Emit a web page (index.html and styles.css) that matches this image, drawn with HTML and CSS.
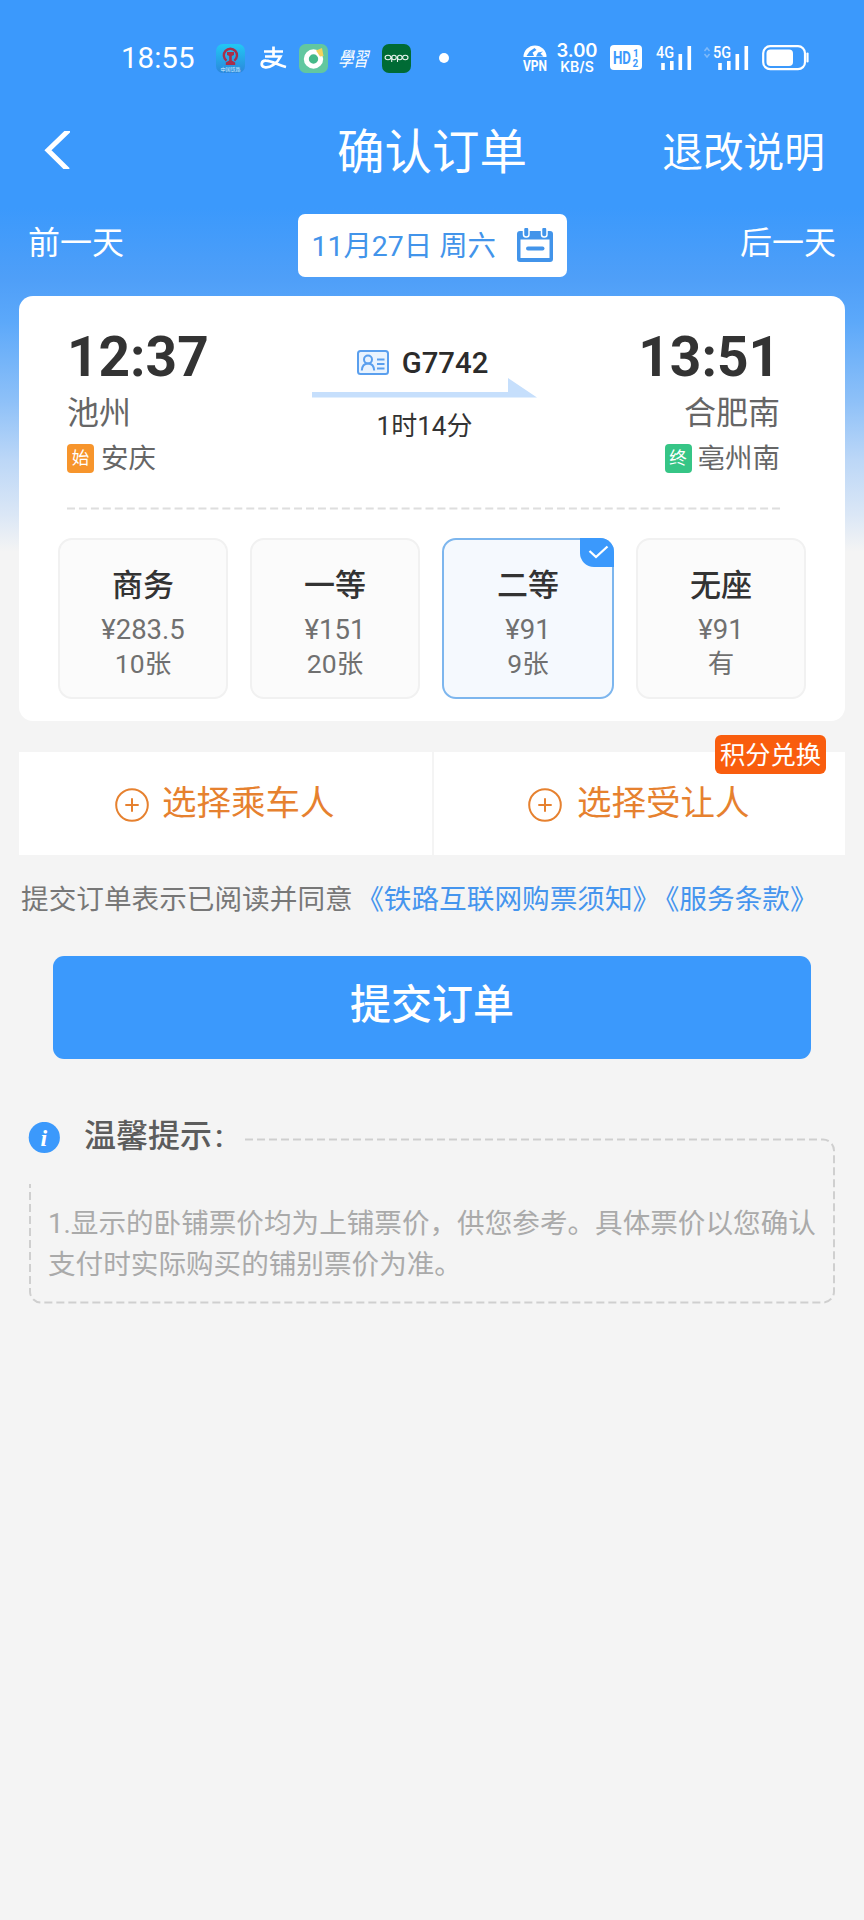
FILE: index.html
```html
<!DOCTYPE html>
<html lang="zh-CN">
<head>
<meta charset="utf-8">
<title>确认订单</title>
<link rel="stylesheet" href="styles.css">
</head>
<body>
<div class="screen">
  <div class="status">
    <span class="clock">18:55</span>
    <svg class="s-rail" width="29" height="29" viewBox="0 0 29 29">
      <defs><linearGradient id="rail" x1="0" y1="0" x2="0" y2="1"><stop offset="0" stop-color="#22c8f4"/><stop offset="1" stop-color="#2b86dc"/></linearGradient></defs>
      <rect width="29" height="29" rx="7" fill="url(#rail)"/>
      <path d="M10.500 16.600A6.600 6.600 0 1 1 18.300 16.600" fill="none" stroke="#a92f4a" stroke-width="2.400"/>
      <path d="M11 8h7v3l-2.200 1v4.500l3.400 2v2.500H9.800v-2.500l3.400-2V12L11 11z" fill="#a92f4a"/>
      <text x="14.500" y="26.500" text-anchor="middle" class="t-rail">中国铁路</text>
    </svg>
    <svg class="s-pay" width="28" height="26" viewBox="0 0 28 26" fill="none" stroke="#fff" stroke-width="2.700">
      <path d="M5 6.500h19M14.500 1.500v9.500M6 11.500h15.500C18 19 11 23 6 22.300c-5-1-4-7 1-6.600 6 .3 12 4.300 20 6.300"/>
    </svg>
    <svg class="s-ring" width="29" height="29" viewBox="0 0 29 29">
      <rect width="29" height="29" rx="6.500" fill="#62c7a0"/>
      <circle cx="14.500" cy="15" r="7.200" fill="#45b989" stroke="#fff" stroke-width="5"/>
      <path d="M17 6.500l6-2.500 1.500 8-3.500.5z" fill="#f4d35d"/>
    </svg>
    <span class="s-study">學習</span>
    <svg class="s-oppo" width="29" height="29" viewBox="0 0 29 29">
      <rect width="29" height="29" rx="7" fill="#006b35"/>
      <g fill="none" stroke="#e9f4ee" stroke-width="1.100"><ellipse cx="6" cy="13.500" rx="2.900" ry="2.200"/><ellipse cx="12" cy="13.500" rx="2.300" ry="2.200"/><ellipse cx="17.800" cy="13.500" rx="2.300" ry="2.200"/><ellipse cx="23.300" cy="13.500" rx="2.700" ry="2.200"/><path d="M9.700 13v5M15.500 13v5"/></g>
    </svg>
    <span class="s-dot"></span>
    <svg class="s-vpn" width="26" height="27" viewBox="0 0 26 27">
      <path d="M1.500 12a11.500 11.500 0 0 1 23 0z" fill="#fff"/>
      <path d="M4.500 11l3-4.500 5-3.500 2 2-4 2.500 1.500 3.500zM14 11.500l2-4 5-1-2.500 2 3 3z" fill="#3b99fc"/>
      <text x="1" y="25.500" class="t-vpn" textLength="24" lengthAdjust="spacingAndGlyphs">VPN</text>
    </svg>
    <span class="speed"><b>3.00</b><i>KB/S</i></span>
    <svg class="s-hd" width="32" height="25" viewBox="0 0 32 25">
      <rect width="32" height="25" rx="4" fill="#fff"/>
      <text x="3" y="19" class="t-hd" textLength="18" lengthAdjust="spacingAndGlyphs">HD</text>
      <text x="23" y="11.500" class="t-sm">1</text><text x="22.500" y="22" class="t-sm">2</text>
    </svg>
    <svg class="s-4g" width="36" height="26" viewBox="0 0 36 26">
      <text x="0" y="12.500" class="t-g" textLength="18" lengthAdjust="spacingAndGlyphs">4G</text>
      <path d="M5.200 18h3.600v7H5.200zM14 16h3.600v9H14zM22.500 9h3.600v16h-3.600zM31.500 1h3.600v24h-3.600z" fill="#fff"/>
    </svg>
    <svg class="s-5g" width="46" height="26" viewBox="0 0 46 26">
      <path d="M1.500 6l2.500-3 2.500 3M1.500 9l2.500 3L6.500 9" fill="none" stroke="#7fbafa" stroke-width="1.500"/>
      <text x="10" y="12.500" class="t-g" textLength="18" lengthAdjust="spacingAndGlyphs">5G</text>
      <path d="M15.200 18h3.600v7h-3.600zM24 16h3.600v9H24zM32.500 9h3.600v16h-3.600zM41.500 1h3.600v24h-3.600z" fill="#fff"/>
    </svg>
    <svg class="s-bat" width="48" height="26" viewBox="0 0 48 26">
      <rect x="1.200" y="1.200" width="41.800" height="23" rx="7" fill="none" stroke="#fff" stroke-width="2.200"/>
      <rect x="4.500" y="4.500" width="26.500" height="16.500" rx="4" fill="#fff"/>
      <path d="M45.500 8.500v8" stroke="#fff" stroke-width="2.200" stroke-linecap="round"/>
    </svg>
  </div>

  <header class="nav">
    <svg class="back" width="27" height="38" viewBox="0 0 27 38"><path d="M26 -1L5 19.200 25 39" fill="none" stroke="#fff" stroke-width="5"/></svg>
    <h1 class="title">确认订单</h1>
    <span class="rules">退改说明</span>
  </header>

  <div class="days">
    <span class="day">前一天</span>
    <div class="date">
      <span class="date-text">11月27日 周六</span>
      <svg width="36" height="34" viewBox="0 0 36 34">
        <path d="M3 3h30a3 3 0 0 1 3 3v25a3 3 0 0 1-3 3H3a3 3 0 0 1-3-3V6a3 3 0 0 1 3-3z" fill="#4294ea"/>
        <path d="M3.500 11.500h29v18.500h-29z" fill="#fff"/>
        <g fill="#4294ea" stroke="#fff" stroke-width="1.500"><rect x="6.500" y="-1" width="5.500" height="10" rx="2.500"/><rect x="24.500" y="-1" width="5.500" height="10" rx="2.500"/></g>
        <path d="M11 20.500h14.500" stroke="#4294ea" stroke-width="4" stroke-linecap="round"/>
      </svg>
    </div>
    <span class="day">后一天</span>
  </div>

  <section class="card">
    <div class="trip">
      <div class="stop">
        <div class="time">12:37</div>
        <div class="station">池州</div>
        <div class="origin"><span class="tag">始</span>安庆</div>
      </div>
      <div class="train">
        <div class="number">
          <svg width="32" height="25" viewBox="0 0 32 25" fill="none" stroke="#5a9fee" stroke-width="2">
            <rect x="1" y="1" width="30" height="23" rx="2.500" fill="#e9f3fe"/>
            <circle cx="11" cy="9.500" r="4"/><path d="M4.800 20.500c.3-5 2.800-7 6.200-7s5.900 2 6.200 7M20 9.500h7.500M20 14h7.500M20 18.500h7.500"/>
          </svg>
          <span>G7742</span>
        </div>
        <svg class="arrow" width="226" height="20" viewBox="0 0 226 20"><path d="M0 14h196V0l29 19.500H0z" fill="#c6dffc"/></svg>
        <div class="duration">1时14分</div>
      </div>
      <div class="stop end">
        <div class="time">13:51</div>
        <div class="station">合肥南</div>
        <div class="origin"><span class="tag green">终</span>亳州南</div>
      </div>
    </div>
    <svg class="rule" width="714" height="3" viewBox="0 0 714 3"><path d="M0 1.500h714" stroke="#dedede" stroke-width="2" stroke-dasharray="8 3.950"/></svg>
    <div class="seats">
      <div class="seat"><b>商务</b><span class="price">¥283.5</span><span class="left">10张</span></div>
      <div class="seat"><b>一等</b><span class="price">¥151</span><span class="left">20张</span></div>
      <div class="seat selected"><b>二等</b><span class="price">¥91</span><span class="left">9张</span>
        <svg class="check" width="34" height="29" viewBox="0 0 34 29"><path d="M0 0h20a14 14 0 0 1 14 14v15H14A14 14 0 0 1 0 15z" fill="#3b99fc"/><path d="M9.500 13l6.500 6L27.500 8.500" fill="none" stroke="#fff" stroke-width="2.300"/></svg>
      </div>
      <div class="seat"><b>无座</b><span class="price">¥91</span><span class="left">有</span></div>
    </div>
  </section>

  <div class="people">
    <div class="person">
      <svg width="34" height="34" viewBox="0 0 34 34" fill="none" stroke="#e6812f" stroke-width="2"><circle cx="17" cy="17" r="15.800"/><path d="M10.300 17h13.400M17 10.300v13.400"/></svg>
      <span>选择乘车人</span>
    </div>
    <div class="person">
      <svg width="34" height="34" viewBox="0 0 34 34" fill="none" stroke="#e6812f" stroke-width="2"><circle cx="17" cy="17" r="15.800"/><path d="M10.300 17h13.400M17 10.300v13.400"/></svg>
      <span>选择受让人</span>
      <em class="points">积分兑换</em>
    </div>
  </div>

  <p class="agree">提交订单表示已阅读并同意<a class="first">《铁路互联网购票须知》</a><a class="second">《服务条款》</a></p>

  <button class="submit">提交订单</button>

  <section class="tips">
    <svg class="tips-frame" width="808" height="167" viewBox="0 0 808 167" fill="none" stroke="#cfcfcf" stroke-width="2" stroke-dasharray="8 4"><path d="M217 1.500h578a11 11 0 0 1 11 11v141a11 11 0 0 1-11 11H13A11 11 0 0 1 2 153.500V46"/></svg>
    <h2 class="tips-head">
      <svg width="32" height="32" viewBox="0 0 32 32"><circle cx="16.300" cy="15.500" r="15.600" fill="#3b99fc"/><text x="15.800" y="23.500" text-anchor="middle" class="t-info">i</text></svg>
      <span>温馨提示<span class="colon">:</span></span>
    </h2>
    <p class="tips-text">1.显示的卧铺票价均为上铺票价，供您参考。具体票价以您确认<br>支付时实际购买的铺别票价为准。</p>
  </section>
</div>
</body>
</html>
```
FILE: styles.css
```css
* { box-sizing: border-box; }
body {
  margin: 0;
  background: #f4f4f4;
  font-family: Roboto, "Noto Sans CJK SC", sans-serif;
  font-weight: 400;
}
svg { display: block; flex: none; }
.screen {
  width: 864px;
  height: 1920px;
  overflow: hidden;
  background: linear-gradient(#3b99fc 0, #3b99fc 208px, #4f9ff8 280px, #5ba8fa 320px, #8dc0f8 400px, #bcd7f7 460px, #dbe7f6 515px, #f4f4f4 552px);
}

/* status bar */
.status { display: flex; align-items: center; height: 116px; padding-left: 121px; color: #fff; }
.status svg { overflow: visible; }
.clock { width: 95px; font: 400 29.500px/36px Roboto, sans-serif; }
.s-pay { margin-left: 14px; }
.s-ring { margin-left: 12px; }
.s-study { width: 30px; margin-left: 12px; font: 400 15px/20px "Noto Sans CJK TC", sans-serif; transform: skewX(-14deg) scaleY(1.3); white-space: nowrap; }
.s-oppo { margin-left: 12px; }
.s-dot { width: 10px; height: 10px; margin-left: 28px; border-radius: 50%; background: #fff; }
.s-vpn { margin-left: 73px; }
.speed { display: flex; flex-direction: column; align-items: center; width: 42px; margin: 0 0 0 8px; font-family: Inter, sans-serif; }
.speed b { font-size: 18.500px; line-height: 17px; font-weight: 600; }
.speed i { font-size: 14px; line-height: 15px; font-style: normal; font-weight: 600; }
.s-hd { margin: -1px 0 0 12px; }
.s-4g { margin: -1px 0 0 14px; }
.s-5g { margin: -1px 0 0 11px; }
.s-bat { margin: 0 0 0 13px; }
.t-rail { font: 5px "Noto Sans CJK SC", sans-serif; fill: #d6f1ff; }
.t-vpn { font: 700 14.500px Roboto, sans-serif; fill: #fff; }
.t-hd { font: 700 18px Roboto, sans-serif; fill: #3b99fc; }
.t-sm { font: 700 10px Roboto, sans-serif; fill: #3b99fc; }
.t-g { font: 500 16px Roboto, sans-serif; fill: #fff; }
.t-info { font: italic 700 24px "Liberation Serif", serif; fill: #fff; }

/* navigation */
.nav { display: grid; grid-template-columns: 1fr auto 1fr; align-items: center; height: 70px; padding: 0 39px 0 43px; color: #fff; }
.back { margin-top: -4px; }
.title { margin: 1px 2px 0 -2px; font-size: 47.500px; line-height: 70px; font-weight: 400; }
.rules { justify-self: end; margin-top: 2px; font-size: 40.700px; line-height: 70px; }

.days { display: flex; align-items: center; justify-content: space-between; height: 110px; padding: 9px 28px 3px; color: #fff; }
.day { font-size: 32px; line-height: 44px; margin-top: -3px; }
.date { display: flex; align-items: center; justify-content: space-between; width: 269px; height: 63px; padding: 0 14px; margin-top: 2px; border-radius: 7px; background: #fff; color: #4294ea; }
.date-text { margin-top: -3px; font-size: 28.400px; white-space: nowrap; }

/* train card */
.card { height: 425px; margin: 0 19px; padding: 29px 37px 22px 39px; border-radius: 14px; background: #fff; }
.trip { display: flex; justify-content: space-between; height: 182px; padding: 0 28px 0 9px; color: #666; }
.stop { width: 180px; }
.time { font-size: 55px; line-height: 64px; font-weight: 700; color: #333; white-space: nowrap; }
.station { height: 46px; font-size: 32px; line-height: 48px; }
.origin { display: flex; align-items: center; height: 42px; font-size: 27.500px; }
.tag { width: 27px; height: 29px; margin: 4px 7px 0 0; border-radius: 4px; background: #f7952c; color: #fff; font-size: 17.500px; line-height: 28px; text-align: center; }
.end .tag { margin-right: 6px; }
.green { background: #36c586; }
.end { text-align: right; }
.end .origin { justify-content: flex-end; }
.train { padding: 20px 0 0 2px; }
.number { display: flex; align-items: center; justify-content: center; gap: 13px; height: 35px; padding-right: 4px; font-size: 29.300px; font-weight: 500; color: #2b2b2b; }
.arrow { margin-top: -2px; }
.duration { margin-top: 8px; text-align: center; font-size: 26px; line-height: 40px; color: #333; }
.rule { margin: 0 0 28px 9px; }
.seats { display: flex; gap: 22px; }
.seat { position: relative; display: flex; flex-direction: column; align-items: center; width: 170px; height: 161px; padding-top: 24px; border: 2px solid #f1f1f1; border-radius: 14px; background: #fbfbfb; color: #707070; }
.seat b { font-size: 31px; line-height: 44px; font-weight: 500; color: #333; }
.price { font-size: 27.500px; line-height: 38px; margin-top: 3px; }
.left { font-size: 26.500px; line-height: 34px; margin-top: -2px; }
.selected { width: 172px; background: #f5f9fe; border-color: #7db6ee; }
.check { position: absolute; top: -2px; right: -2px; }

/* passenger pickers */
.people { display: flex; gap: 2px; height: 103px; margin: 31px 19px 0; }
.person { position: relative; display: flex; flex: 1; align-items: center; gap: 13px; padding-left: 96px; background: #fff; color: #e6812f; font-size: 34.500px; }
.person + .person { padding-left: 94px; gap: 15px; }
.person svg { margin-top: 3px; }
.person span { margin-top: -7px; }
.points { position: absolute; top: -17px; right: 19px; width: 111px; height: 39px; border-radius: 6px; background: #f95d0e; color: #fff; font-size: 25.300px; line-height: 41px; font-style: normal; text-align: center; }

.agree { height: 40px; margin: 25px 0 0 21px; font-size: 27.650px; line-height: 40px; color: #777; white-space: nowrap; font-kerning: none; }
.agree a { color: #4595ee; text-spacing-trim: space-all; }
.first { margin-left: 3.500px; }
.second { margin-left: -8.500px; }

.submit { display: block; width: 758px; height: 103px; margin: 36px 53px 0; padding: 0 0 13px; border: 0; border-radius: 11px; background: #3b99fc; color: #fff; font-family: inherit; font-size: 41px; font-weight: 500; }

/* notice */
.tips { position: relative; margin-top: 53px; padding: 0 28px; }
.tips-frame { position: absolute; left: 28px; top: 26px; }
.tips-head { display: flex; align-items: center; gap: 24px; height: 50px; margin: 0; font-size: 32px; font-weight: 500; color: #5c5c5c; }
.tips-head > svg { margin-top: 1px; }
.tips-head > span { margin-top: -8px; }
.colon { margin-left: 3px; }
.tips-text { margin: 41px 0 0 20px; font-size: 27.600px; line-height: 41px; color: #aaa; white-space: nowrap; text-spacing-trim: space-all; }
```
